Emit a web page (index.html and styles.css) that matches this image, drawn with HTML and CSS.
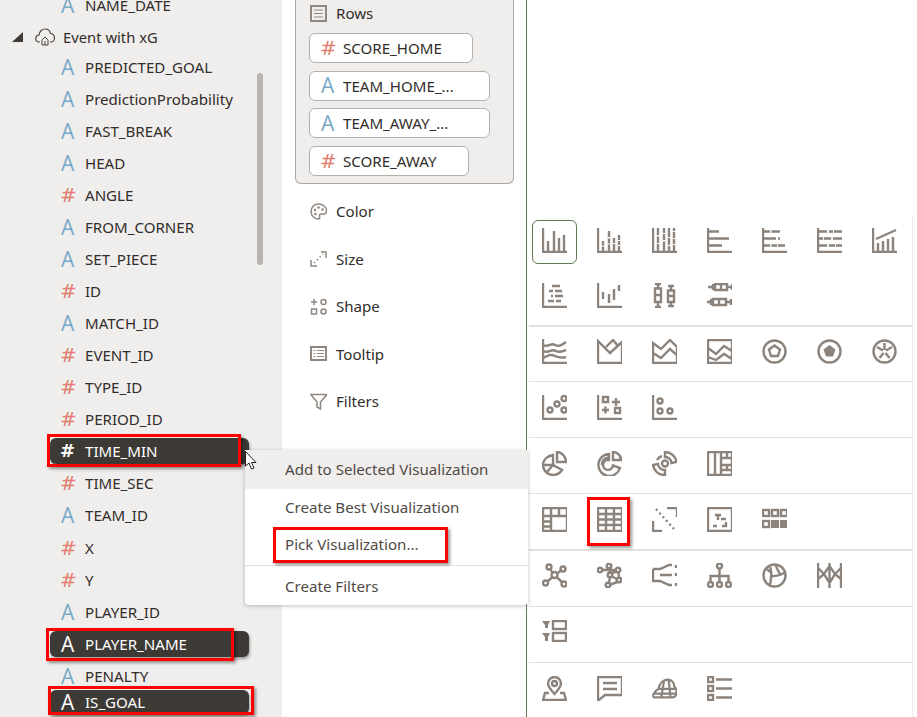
FILE: index.html
```html
<!DOCTYPE html>
<html lang="en">
<head>
<meta charset="utf-8">
<title>Visualization grammar</title>
<link rel="stylesheet" href="styles.css">
</head>
<body>
<div class="app">
  <aside class="fields">
    <div class="row"><span class="t a">A</span><span>NAME_DATE</span></div>
    <div class="folder">
      <svg class="tri" viewBox="0 0 11 10"><polygon points="11,0 11,10 0,10"/></svg>
      <svg class="cloud" viewBox="0 0 20 18"><path d="M5 14H4C1 14 .5 11.500 .8 10 1.200 8 3 7 4 7 4.500 3 7.500 1 10 1c3 0 5 2 5.500 4.500C18 6 19.500 8 19.500 10c0 2-1.500 4-3.500 4h-1"/><path class="thin" d="M7 12l3-3 3 3v5H7zM9 14h2M9 16h2"/></svg>
      <span>Event with xG</span>
    </div>
    <div class="row"><span class="t a">A</span><span>PREDICTED_GOAL</span></div>
    <div class="row"><span class="t a">A</span><span>PredictionProbability</span></div>
    <div class="row"><span class="t a">A</span><span>FAST_BREAK</span></div>
    <div class="row"><span class="t a">A</span><span>HEAD</span></div>
    <div class="row"><span class="t h">#</span><span>ANGLE</span></div>
    <div class="row"><span class="t a">A</span><span>FROM_CORNER</span></div>
    <div class="row"><span class="t a">A</span><span>SET_PIECE</span></div>
    <div class="row"><span class="t h">#</span><span>ID</span></div>
    <div class="row"><span class="t a">A</span><span>MATCH_ID</span></div>
    <div class="row"><span class="t h">#</span><span>EVENT_ID</span></div>
    <div class="row"><span class="t h">#</span><span>TYPE_ID</span></div>
    <div class="row"><span class="t h">#</span><span>PERIOD_ID</span></div>
    <div class="row sel"><span class="t h">#</span><span>TIME_MIN</span></div>
    <div class="row"><span class="t h">#</span><span>TIME_SEC</span></div>
    <div class="row"><span class="t a">A</span><span>TEAM_ID</span></div>
    <div class="row shift"><span class="t h">#</span><span>X</span></div>
    <div class="row"><span class="t h">#</span><span>Y</span></div>
    <div class="row"><span class="t a">A</span><span>PLAYER_ID</span></div>
    <div class="row sel"><span class="t a">A</span><span>PLAYER_NAME</span></div>
    <div class="row"><span class="t a">A</span><span>PENALTY</span></div>
    <div class="row sel goal"><span class="t a">A</span><span>IS_GOAL</span></div>
    <div class="scrollbar"></div>
  </aside>

  <section class="config">
    <div class="rows-box">
      <div class="rows-title">
        <svg class="gi" viewBox="0 0 17 17"><rect x="1" y="1" width="15" height="15"/><path class="thin" d="M4 5h9M4 8.500h9M4 12h9"/></svg>
        <span>Rows</span>
      </div>
      <div class="chip w1"><span class="t h">#</span><span>SCORE_HOME</span></div>
      <div class="chip w2"><span class="t a">A</span><span>TEAM_HOME_...</span></div>
      <div class="chip w2"><span class="t a">A</span><span>TEAM_AWAY_...</span></div>
      <div class="chip w3"><span class="t h">#</span><span>SCORE_AWAY</span></div>
    </div>
    <div class="prop">
      <svg class="gi" viewBox="0 0 17 17"><path class="thin15" d="M8.500 1C4 1 1 4.500 1 8.500 1 12.500 4.500 16 8 16c2 0 2-1.500 1.500-2.500-.5-1.500.5-2.500 2-2.500H14c2 0 2.500-1.500 2.500-3C16.500 4 13 1 8.500 1z"/><circle class="dot" cx="5" cy="7" r="1.300"/><circle class="dot" cx="8.500" cy="4.500" r="1.300"/><circle class="dot" cx="12.500" cy="6.500" r="1.300"/><circle class="dot" cx="5.500" cy="11" r="1.300"/></svg>
      <span>Color</span>
    </div>
    <div class="prop">
      <svg class="gi" viewBox="0 0 17 17"><path class="thin15" d="M1 10v6h6M11 2h5v6"/><path class="thin15 dash" d="M4 13l9-9"/></svg>
      <span>Size</span>
    </div>
    <div class="prop">
      <svg class="gi" viewBox="0 0 17 17"><path class="thin15" d="M1 4h6M4 1v6"/><circle class="thin15" cx="13.500" cy="4" r="2.500"/><rect class="thin15" x="1.500" y="11" width="5" height="5"/><circle class="thin15" cx="13.500" cy="13.500" r="2.500"/></svg>
      <span>Shape</span>
    </div>
    <div class="prop">
      <svg class="gi" viewBox="0 0 17 17"><rect x="1" y="2" width="15" height="13"/><path class="thin" d="M3.500 5.500h2M7 5.500h7M3.500 8.500h2M7 8.500h7M3.500 11.500h2M7 11.500h7"/></svg>
      <span>Tooltip</span>
    </div>
    <div class="prop">
      <svg class="gi" viewBox="0 0 17 17"><path class="thin15" d="M.8 1.500h16L10.500 9v7l-3.500-2V9z"/></svg>
      <span>Filters</span>
    </div>
  </section>

  <section class="gallery">
    <div class="gsec first">
      <span class="cell on"><svg class="ic" viewBox="0 0 25 25"><path d="M1 0V24H25M6 13V23M12 3V23M17 10V23M22 7V23"/></svg></span>
      <span class="cell"><svg class="ic" viewBox="0 0 25 25"><path d="M1 0V24H25M6 13V23M12 3V23M17 10V23M22 7V23"/><path class="gap" d="M6 17.500v1M12 9v1.500M17 15v1M22 12v1M12 15.500v1M22 17v1"/></svg></span>
      <span class="cell"><svg class="ic" viewBox="0 0 25 25"><path d="M1 0V24H25M6 0V23M12 0V23M17 0V23M22 0V23"/><path class="gap" d="M6 7v1.500M6 15v1M12 12v1.500M12 5v1M17 9v1M17 17v1M22 3v1M22 10v1M22 16v1"/></svg></span>
      <span class="cell"><svg class="ic" viewBox="0 0 25 25"><path d="M1 0V24H25M1 3.500H12M1 10.500H22M1 17.500H15"/></svg></span>
      <span class="cell"><svg class="ic" viewBox="0 0 25 25"><path d="M1 0V24H25M1 3.500H18M1 10.500H14M16 10.500H18M1 17.500H23"/><path class="gap" d="M8 3.500h1.500M8 17.500h1.500M15 17.500h1"/></svg></span>
      <span class="cell"><svg class="ic" viewBox="0 0 25 25"><path d="M1 0V24H25M1 3.500H25M1 10.500H25M1 17.500H25"/><path class="gap" d="M10 3.500h2M16 3.500h1M6 10.500h1M14 10.500h2M10 17.500h2M18 17.500h1"/></svg></span>
      <span class="cell"><svg class="ic" viewBox="0 0 25 25"><path d="M1 0V24H25M6 15V23M11 13V23M16 11V23M21 9V23M4 11L24 2"/></svg></span>
      <span class="cell"><svg class="ic" viewBox="0 0 25 25"><path d="M1 0V24H25M10 3h8M7 8h4M13 8h7M9 13h2M13 13h8M6 18h6M14 18h5"/></svg></span>
      <span class="cell"><svg class="ic" viewBox="0 0 25 25"><path d="M1 0V24H25M6 9V16M12 11V20M17 6V17M22 2V8"/></svg></span>
      <span class="cell"><svg class="ic" viewBox="0 0 25 25"><path d="M3 1h6M6 1v4M3 5.500h6V19H3zM3 12h6M6 19v5M3 24h6M16 3h6M19 3v4M16 7.500h6V19h-6zM16 13h6M19 19v4M16 23h6"/></svg></span>
      <span class="cell"><svg class="ic" viewBox="0 0 25 25"><path d="M1 4h5M6 1v6M8 1h12V7H8zM14 1V7M20 4h5M0 19h4M4 16v6M6 16h13v6H6zM12 16v6M19 19h5M24 16v6M25 1v6"/></svg></span>
    </div>
    <div class="gsec thick">
      <span class="cell"><svg class="ic" viewBox="0 0 25 25"><path d="M1 0V24H25M1 6c6 3 8-3 12 0 4 2 7 0 11-3M1 12c7 3 8-3 13 0 4 2 7 0 10-1M1 19c6-3 8-4 12-2 4 2 7 2 11 1"/></svg></span>
      <span class="cell"><svg class="ic" viewBox="0 0 25 25"><path d="M1 2V24H25V3L13 14zM9 8L16 1 21 7"/></svg></span>
      <span class="cell"><svg class="ic" viewBox="0 0 25 25"><path d="M1 24V4L9 10 18 1 25 8V24zM1 14L9 19 18 10 25 16"/></svg></span>
      <span class="cell"><svg class="ic" viewBox="0 0 25 25"><path d="M1 1H25V24H1zM1 9L9 15 17 7 25 12M1 18L9 21 17 15 25 20"/></svg></span>
      <span class="cell"><svg class="ic" viewBox="0 0 25 25"><circle cx="12.500" cy="12.500" r="11"/><path d="M12.500 6.500L18 10.500 16 17H9L7 10.500z"/></svg></span>
      <span class="cell"><svg class="ic" viewBox="0 0 25 25"><circle cx="12.500" cy="12.500" r="11"/><path class="solid" d="M12.500 6L18.500 10.500 16 17.500H9L6.500 10.500z"/></svg></span>
      <span class="cell"><svg class="ic" viewBox="0 0 25 25"><circle cx="12.500" cy="12.500" r="11"/><path d="M12.500 11V4M14 11.500L20 8M13.500 14L17.500 19M11.500 14L7.500 19M11 11.500L5 8"/></svg></span>
    </div>
    <div class="gsec">
      <span class="cell"><svg class="ic" viewBox="0 0 25 25"><path d="M1 0V24H25"/><circle cx="8" cy="15" r="2.500"/><circle cx="15" cy="9" r="2.500"/><circle cx="22" cy="3.500" r="2.500"/><circle cx="22" cy="15" r="2.500"/></svg></span>
      <span class="cell"><svg class="ic" viewBox="0 0 25 25"><path d="M1 0V24H25M15 7h8M19 3v8M5 15h7M8.500 11.500v7"/><rect x="6" y="2" width="5" height="5"/><rect x="18" y="13" width="5" height="5"/></svg></span>
      <span class="cell"><svg class="ic" viewBox="0 0 25 25"><path d="M1 0V24H25"/><circle cx="8" cy="6" r="2.500"/><circle cx="8" cy="16" r="2.500"/><circle cx="18" cy="16" r="2.500"/></svg></span>
    </div>
    <div class="gsec">
      <span class="cell"><svg class="ic" viewBox="0 0 25 25"><path d="M15 1V11H24C24 6 20 1 15 1zM11 4C5 5 1 9 1 14 1 20 6 24 11 24 15 24 18 22 20 19L11 14zM1 14H11L5 21"/></svg></span>
      <span class="cell"><svg class="ic" viewBox="0 0 25 25"><path d="M16 1V9H24A8 8 0 0 0 16 1zM12 3A11 11 0 1 0 23 17L16 14.500A5 5 0 1 1 12 9zM5 14A7 7 0 0 1 11 6.500"/></svg></span>
      <span class="cell"><svg class="ic" viewBox="0 0 25 25"><path d="M13 1A11.500 11.500 0 0 1 24.500 11L19.500 12A6.500 6.500 0 0 0 13 6zM1 14A11.500 11.500 0 0 0 13 24L13 19A6.500 6.500 0 0 1 6 13zM5 9A8.500 8.500 0 0 1 10 5"/><circle cx="13" cy="12.500" r="3"/></svg></span>
      <span class="cell"><svg class="ic" viewBox="0 0 25 25"><path d="M1 1H25V24H1zM8 1V24M14 1V24M14 7H25M20 1V7M14 14H25M14 19H25M20 14V19"/></svg></span>
    </div>
    <div class="gsec">
      <span class="cell"><svg class="ic" viewBox="0 0 25 25"><path d="M1 1H25V24H1zM1 9H25M9 1V24M17 1V9M1 14.500H9M1 19.500H9"/></svg></span>
      <span class="cell"><svg class="ic" viewBox="0 0 25 25"><path d="M1 1H25V24H1zM1 7H25M1 12.500H25M1 18H25M9 1V24M17 1V24"/></svg></span>
      <span class="cell"><svg class="ic" viewBox="0 0 25 25"><path d="M1 14V24H10M15 1H25V10"/><path class="dots" d="M4 2L22 22"/></svg></span>
      <span class="cell"><svg class="ic" viewBox="0 0 25 25"><path d="M1 1H25V24H1zM8 8H14M11 8V13M14 12H19M6 19H10M15 19H19V15"/></svg></span>
      <span class="cell"><svg class="ic" viewBox="0 0 25 25"><rect x="1" y="3" width="6" height="6"/><rect x="10" y="3" width="6" height="6"/><rect x="19" y="3" width="6" height="6"/><rect x="1" y="14" width="6" height="6"/><rect class="solid" x="9" y="13" width="8" height="8"/><rect class="solid" x="18" y="13" width="8" height="8"/></svg></span>
    </div>
    <div class="gsec thick tall">
      <span class="cell"><svg class="ic" viewBox="0 0 25 25"><circle cx="12.500" cy="12" r="3"/><circle cx="7" cy="4" r="2.500"/><circle cx="21" cy="6" r="2.500"/><circle cx="3.500" cy="20" r="2.500"/><circle cx="22" cy="21" r="2.500"/><path d="M8.500 6L10.500 10M15 10.500L19 7.500M10.500 14L5.500 18.500M14.500 14L20.500 19.500"/></svg></span>
      <span class="cell"><svg class="ic" viewBox="0 0 25 25"><circle cx="3" cy="7" r="2.300"/><circle cx="12" cy="3" r="2.300"/><circle cx="21" cy="7" r="2.300"/><circle cx="13" cy="12" r="2.300"/><circle cx="22" cy="17" r="2.300"/><circle cx="11" cy="22" r="2.300"/><path d="M5.500 7H18.500M12 5L13 9.500M14.500 10L20 8.500M21.500 9.500L22 14.500M13 14.500L12 19.500M15 13.500L20 16M20.500 19L13.500 21.500"/></svg></span>
      <span class="cell"><svg class="ic" viewBox="0 0 25 25"><path d="M1 6H8L17 2H20M1 6V18H8L17 22H20M8 12L15 12H20M24 2v3M24 10v3M24 20v3"/></svg></span>
      <span class="cell"><svg class="ic" viewBox="0 0 25 25"><circle cx="12.500" cy="3" r="2.500"/><circle cx="3.500" cy="21.500" r="2.500"/><circle cx="12.500" cy="21.500" r="2.500"/><circle cx="21.500" cy="21.500" r="2.500"/><path d="M12.500 6V19M3.500 19V13H21.500V19"/></svg></span>
      <span class="cell"><svg class="ic" viewBox="0 0 25 25"><circle cx="12.500" cy="12.500" r="11"/><path d="M8 4C10 8 10 12 8 22M8 14C12 12 18 14 23 9M14 2C14 5 15 6 18 11M5 6C8 9 8 9 10 9"/></svg></span>
      <span class="cell"><svg class="ic" viewBox="0 0 25 25"><path d="M1 0V25M12.500 0V25M24 0V25M1 5L7 11 12.500 3 18 11 24 5M1 16L7 11 12.500 20 18 11 24 16"/></svg></span>
    </div>
    <div class="gsec">
      <span class="cell"><svg class="ic short" viewBox="0 0 25 22"><path class="solid" d="M0 1H8L6 5V8H3V5zM0 13H8L6 17V21H3V17z"/><rect x="11" y="1" width="13" height="8"/><rect x="11" y="13" width="13" height="8"/></svg></span>
    </div>
    <div class="gsec">
      <span class="cell"><svg class="ic" viewBox="0 0 25 25"><path d="M12.500 18C8 13 6 10 6 7.500 6 4 9 1 12.500 1S19 4 19 7.500C19 10 17 13 12.500 18zM7 17H3L1 24H24L22 17H18"/><circle cx="12.500" cy="7.500" r="2.500"/></svg></span>
      <span class="cell"><svg class="ic" viewBox="0 0 25 25"><path d="M1 1H25V19H8L2 24H1zM6 7H20M6 13H20"/></svg></span>
      <span class="cell"><svg class="ic" viewBox="0 0 27 25"><path d="M2 22C1 21 1 19 2 18 3 15 5 14 7 13 8 7 12 3 17 3 21 3 24 6 24 10 26 12 27 15 26 18 26 21 24 22 22 22zM7 13H26M2 18H26M13 4L10 22M18 3L20 22"/></svg></span>
      <span class="cell"><svg class="ic" viewBox="0 0 25 25"><rect x="1" y="1" width="5" height="5"/><rect x="1" y="10" width="5" height="5"/><rect x="1" y="19" width="5" height="5"/><path d="M9 3.500H25M9 12.500H25M9 21.500H25"/></svg></span>
    </div>
  </section>

  <nav class="menu">
    <div class="mi active">Add to Selected Visualization</div>
    <div class="mi">Create Best Visualization</div>
    <div class="mi">Pick Visualization...</div>
    <div class="mi last">Create Filters</div>
  </nav>

  <svg class="cursor" viewBox="0 0 12 19"><path d="M.5 .5V15L4 12 6.500 18 9 17 6.500 11.500H11z"/></svg>

  <div class="mark m1"></div>
  <div class="mark m2"></div>
  <div class="mark m3"></div>
  <div class="mark m4"></div>
  <div class="mark m5"></div>
</div>
</body>
</html>
```
FILE: styles.css
```css
html, body { margin: 0; padding: 0; background: #fff; }
.app {
  position: relative;
  display: flex;
  width: 917px;
  height: 717px;
  overflow: hidden;
  font-family: "Noto Sans", "Open Sans", sans-serif;
  font-size: 15.100px;
  color: #312d2a;
}

/* data panel */
.fields {
  position: relative;
  flex: 0 0 282px;
  height: 728px;
  margin-top: -11px;
  background: #f0eeed;
  box-sizing: border-box;
}
.folder {
  display: flex;
  align-items: center;
  height: 30px;
  padding: 2px 0 0 12px;
  box-sizing: border-box;
  font-size: 14.800px;
}
.tri { width: 11px; height: 10px; fill: #3f3b36; margin-right: 12px; }
.cloud { width: 20px; height: 18px; fill: none; stroke: #4a4640; stroke-width: 1.200; margin-right: 8px; }
.cloud .thin { stroke-width: 1; }
.row {
  display: flex;
  align-items: center;
  height: 32px;
  width: 199px;
  margin-left: 50px;
  padding-left: 10px;
  box-sizing: border-box;
}
.t {
  flex: 0 0 25px;
  width: 25px;
  font-family: "Open Sans", sans-serif;
  line-height: 1;
}
.a { color: #76a9c6; font-size: 21px; font-weight: 500; text-indent: 1px; }
.h { color: #e07f70; font-family: "DejaVu Sans", sans-serif; font-size: 20px; }
.shift { margin-top: 1px; }
.sel {
  height: 26px;
  margin-top: 3px;
  margin-bottom: 3px;
  background: #3d3a35;
  color: #fff;
  border-radius: 6px;
  box-shadow: 1px 2px 3px rgba(0, 0, 0, .35);
}
.sel .t { color: #fff; }
.sel .h { font-weight: 700; font-size: 18px; }
.goal { height: 24px; margin-top: -2px; margin-bottom: 0; }
.scrollbar {
  position: absolute;
  left: 257px;
  top: 84px;
  width: 6px;
  height: 192px;
  background: #bab4ae;
  border-radius: 3px;
}

/* grammar column */
.config {
  flex: 0 0 245px;
  height: 717px;
  padding-left: 13px;
  box-sizing: border-box;
  border-right: 1px solid #5f7a50;
}
.rows-box {
  width: 219px;
  height: 184px;
  box-sizing: border-box;
  padding: 0 13px;
  background: #f0eeed;
  border: 1px solid #aca7a1;
  border-top: 0;
  border-radius: 0 0 6px 6px;
}
.rows-title {
  display: flex;
  align-items: center;
  height: 26px;
  gap: 9px;
  padding-left: 1px;
}
.gi {
  flex: 0 0 17px;
  width: 17px;
  height: 17px;
  fill: none;
  stroke: #8f8780;
  stroke-width: 2;
}
.gi .thin { stroke-width: 1.200; }
.gi .thin15 { stroke-width: 1.500; fill: none; }
.gi .dash { stroke-dasharray: 1.500 2.500; }
.gi .dot { fill: #8f8780; stroke: none; }
.chip {
  display: flex;
  align-items: center;
  height: 30px;
  margin-bottom: 7.700px;
  padding-left: 10px;
  box-sizing: border-box;
  background: #fff;
  border: 1px solid #b5b0ab;
  border-radius: 6px;
}
.rows-title + .chip { margin-top: 7px; }
.w1 { width: 164px; }
.w2 { width: 181px; }
.w3 { width: 160px; }
.chip .t { flex: 0 0 23px; width: 23px; }
.prop {
  display: flex;
  align-items: center;
  gap: 9px;
  height: 47.500px;
  padding-left: 15px;
}
.rows-box + .prop { margin-top: 3.500px; }

/* visualisation gallery */
.gallery { flex: 0 0 386px; padding-top: 215px; }
.gsec {
  position: relative;
  display: flex;
  flex-wrap: wrap;
  align-content: flex-start;
  width: 386px;
  height: 56px;
  box-sizing: border-box;
  padding-top: 14px;
}
.gsec::before {
  content: "";
  position: absolute;
  left: 2px;
  right: 0;
  top: 0;
  height: 1px;
  background: #e2e1de;
}
.gsec::after {
  content: "";
  position: absolute;
  right: 0;
  top: 0;
  bottom: 0;
  width: 1px;
  background: #eeedeb;
}
.gsec.first {
  height: 110px;
  padding-top: 13px;
  row-gap: 30px;
}
.gsec.first::before { display: none; }
.gsec.thick::before { height: 2px; }
.gsec.tall { height: 57px; }
.cell {
  position: relative;
  display: flex;
  justify-content: center;
  width: 55px;
  height: 25px;
}
.cell.on::before {
  content: "";
  position: absolute;
  left: 5px;
  top: -8px;
  width: 45px;
  height: 44px;
  box-sizing: border-box;
  border: 1px solid #5f7a50;
  border-radius: 6px;
}
.ic {
  width: 25px;
  height: 25px;
  fill: none;
  stroke: #8b837c;
  stroke-width: 2.400;
}
.ic.short { height: 22px; }
.ic .gap { stroke: #fff; stroke-width: 2.500; }
.ic .solid { fill: #8b837c; stroke: none; }
.ic .dots { stroke-dasharray: 2 3; }

/* context menu */
.menu {
  position: absolute;
  left: 245px;
  top: 450px;
  width: 283px;
  height: 155px;
  background: #fff;
  border-radius: 4px;
  box-shadow: 0 1px 4px rgba(0, 0, 0, .25);
}
.mi {
  height: 37px;
  line-height: 37px;
  padding-left: 40px;
  color: #4f4a45;
}
.mi.active { height: 39px; line-height: 39px; background: #f0eeed; }
.mi.last {
  height: 40px;
  margin-top: 2px;
  border-top: 1px solid #e2e1de;
  line-height: 41px;
}
.cursor {
  position: absolute;
  left: 245px;
  top: 451px;
  width: 12px;
  height: 19px;
  fill: #fff;
  stroke: #222;
  stroke-width: 1;
}

/* red annotation boxes */
.mark {
  position: absolute;
  box-sizing: border-box;
  border: 3px solid #f00;
  box-shadow: 2px 2px 3px rgba(0, 0, 0, .4);
}
.m1 { left: 47px; top: 434px; width: 194px; height: 33px; }
.m2 { left: 46px; top: 628px; width: 188px; height: 33px; }
.m3 { left: 48px; top: 686px; width: 206px; height: 29px; }
.m4 { left: 273px; top: 527px; width: 175px; height: 36px; }
.m5 { left: 587px; top: 497px; width: 43px; height: 49px; }
```
